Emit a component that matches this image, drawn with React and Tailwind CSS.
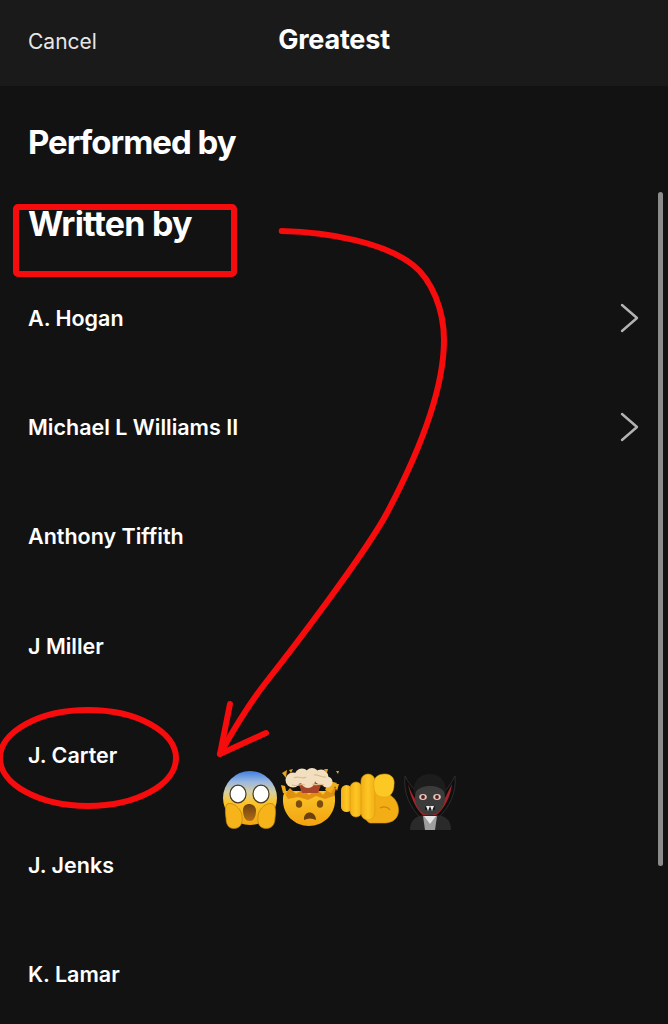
import React from "react";

const names = ["A. Hogan", "Michael L Williams II", "Anthony Tiffith", "J Miller", "J. Carter", "J. Jenks", "K. Lamar"];
const withChevron = new Set(["A. Hogan", "Michael L Williams II"]);

function Chevron() {
  return (
    <svg width="20" height="32" viewBox="0 0 20 32" fill="none" stroke="#b3b3b3" strokeWidth="2.4" strokeLinecap="round" strokeLinejoin="round">
      <path d="M2 3 L17 16 L2 29" />
    </svg>
  );
}

function Fear() {
  return (
    <g>
      <ellipse cx="250" cy="798" rx="27" ry="27" fill="url(#fearG)" />
      <ellipse cx="238" cy="794" rx="8" ry="8.8" fill="#fff" stroke="#4a3a20" strokeWidth="1.2" />
      <ellipse cx="261" cy="794" rx="8" ry="8.8" fill="#fff" stroke="#4a3a20" strokeWidth="1.2" />
      <path d="M243 810 C243 802 255 802 256 810 C256 818 253 821 250 821 C246 821 243 818 243 810Z" fill="url(#mouthG)" />
      <path d="M227 804 C232 802 238 806 241 812 C243 818 243 826 237 828 C230 830 226 826 226 818 C225 812 225 807 227 804Z" fill="#f6b41a" stroke="#b97f0e" strokeWidth="0.7" />
      <path d="M273 804 C268 802 262 806 259 812 C257 818 257 826 263 828 C270 830 275 826 275 818 C276 812 276 807 273 804Z" fill="#f6b41a" stroke="#b97f0e" strokeWidth="0.7" />
    </g>
  );
}

function Explode() {
  return (
    <g>
      <path d="M283 798 C282 815 295 826 309 826 C323 826 336 815 335 798 C335 795 334 793 333 791 L286 791 C284 793 283 795 283 798Z" fill="url(#faceG)" />
      <path d="M285 794 L290 788 L296 794 L303 789 L309 795 L317 789 L323 795 L330 786 L336 788 L334 796 L325 799 L316 796 L308 800 L298 797 L288 799Z" fill="#e09010" />
      <path d="M281 785 L285 786 L287 795 L283 793Z M329 781 L337 783 L331 793 L325 790Z M334 784 L339 784 L337 791Z" fill="#f3ad1c" />
      <path d="M298 782 L322 782 L318 793 L302 793Z" fill="#a9452a" />
      <g fill="#f2dfc0">
        <circle cx="293" cy="780" r="7.5" />
        <circle cx="302" cy="776" r="7.5" />
        <circle cx="312" cy="775" r="7" />
        <circle cx="321" cy="777" r="7.5" />
        <circle cx="327" cy="782" r="5.5" />
        <circle cx="308" cy="781" r="7" />
      </g>
      <path d="M294 778 C298 775 302 780 306 777 M314 775 C318 774 322 778 326 777 M292 785 C297 787 301 783 305 785 M312 784 C316 786 320 783 324 785" stroke="#dcbb8c" strokeWidth="1.2" />
      <path d="M282 773 L287 770 L286 778Z M289 770 L293 769 L291 773Z M324 769 L328 769 L327 773Z M336 771 L339 771 L338 774Z" fill="#e9a21c" />
      <ellipse cx="299" cy="804" rx="3.2" ry="3.8" fill="#7a4c10" />
      <ellipse cx="320" cy="804" rx="3.2" ry="3.8" fill="#7a4c10" />
      <path d="M304 820 C303 810 316 810 316 820 C312 818 308 818 304 820Z" fill="#6b3f10" />
    </g>
  );
}

function Point() {
  return (
    <g>
      <path d="M372 790 C384 790 396 796 398 806 C400 815 396 822 386 823 L370 823 C362 820 360 800 372 790Z" fill="#f2ae14" stroke="#d6950f" strokeWidth="0.6" />
      <rect x="341" y="785" width="11" height="27" rx="5.5" fill="url(#fingerG)" />
      <rect x="350" y="782" width="12" height="35" rx="6" fill="url(#fingerG)" stroke="#dc9b10" strokeWidth="0.6" />
      <rect x="361" y="774" width="14" height="46" rx="7" fill="url(#fingerG)" stroke="#dc9b10" strokeWidth="0.6" />
      <path d="M374 786 C373 778 377 774 385 774 C392 774 395 779 394 785 C394 792 390 798 384 797 C377 797 374 793 374 786Z" fill="#fcc824" stroke="#e0a012" strokeWidth="0.5" />
      <path d="M380 808 C384 806 388 807 390 810" stroke="#c98a0c" strokeWidth="1.3" />
    </g>
  );
}

function Vampire() {
  return (
    <g>
      <path d="M405 776 C403 792 410 808 421 818 L438 818 C449 808 457 792 455 776 C452 782 449 786 446 790 L415 790 C411 786 408 782 405 776Z" fill="#0e0e0e" stroke="#333" strokeWidth="0.8" />
      <path d="M408 784 C410 796 416 810 424 816 L435 816 C444 810 451 796 452 784 C449 790 446 796 444 800 L416 800 C413 796 410 790 408 784Z" fill="#a02428" />
      <path d="M410 830 C410 820 416 816 424 815 L436 815 C446 816 451 820 451 830Z" fill="#2a2a2a" />
      <path d="M423 816 L437 816 L435 830 L425 830Z" fill="#9f9f9f" />
      <path d="M424 816 L436 816 L430 824Z" fill="#e6e6e6" />
      <ellipse cx="430" cy="797" rx="15" ry="18" fill="#3b3b3b" />
      <path d="M414 795 C412 781 420 774 430 774 C440 774 447 781 446 795 C443 788 437 786 430 786 C423 786 417 788 414 795Z" fill="#1c1c1c" />
      <ellipse cx="423" cy="797" rx="3.8" ry="3" fill="#e3c8c2" />
      <ellipse cx="437" cy="797" rx="3.8" ry="3" fill="#e3c8c2" />
      <circle cx="423" cy="797" r="1.9" fill="#5c1c1c" />
      <circle cx="437" cy="797" r="1.9" fill="#5c1c1c" />
      <rect x="425" y="806" width="10" height="4" rx="1.5" fill="#161616" />
      <path d="M426 806 L428 811 L430 806Z M430 806 L432 811 L434 806Z" fill="#eee" />
    </g>
  );
}

export default function App() {
  return (
    <div className="relative w-[668px] h-[1024px] overflow-hidden bg-[#121212] text-white font-['Inter','Liberation_Sans',sans-serif]">
      <header className="relative flex h-[86px] items-center justify-center bg-[#1a1a1a]">
        <span className="absolute left-7 top-[28px] text-[21px] leading-7 font-normal text-[#e6e6e6]">Cancel</span>
        <h1 className="text-[27px] leading-8 font-bold tracking-[-0.2px] -mt-[7px]">Greatest</h1>
      </header>
      <main className="px-7">
        <h2 className="mt-[33px] h-[46px] text-[33px] leading-[46px] font-bold tracking-[-1px]">Performed by</h2>
        <h2 className="mt-[36px] h-[46px] text-[34px] leading-[46px] font-bold tracking-[-0.8px]">Written by</h2>
        <ul className="mt-[16px]">
          {names.map((name) => (
            <li key={name} className="flex h-[109.4px] items-center justify-between">
              <span className="text-[21.5px] font-semibold">{name}</span>
              {withChevron.has(name) && <Chevron />}
            </li>
          ))}
        </ul>
      </main>
      <div className="absolute left-[658px] top-[192px] h-[674px] w-[5px] rounded-full bg-[#8c8c8c]" />
      <svg className="absolute inset-0 pointer-events-none" width="668" height="1024" viewBox="0 0 668 1024" fill="none">
        <defs>
          <linearGradient id="fearG" x1="0" y1="0" x2="0" y2="1">
            <stop offset="0" stopColor="#3f7fe0" />
            <stop offset="0.2" stopColor="#9ab8e0" />
            <stop offset="0.4" stopColor="#d8d0a0" />
            <stop offset="0.58" stopColor="#fbc52a" />
            <stop offset="1" stopColor="#f2a510" />
          </linearGradient>
          <linearGradient id="faceG" x1="0" y1="0" x2="0" y2="1">
            <stop offset="0" stopColor="#fbc52a" />
            <stop offset="1" stopColor="#f2a30f" />
          </linearGradient>
          <linearGradient id="mouthG" x1="0" y1="0" x2="0" y2="1">
            <stop offset="0" stopColor="#6e4110" />
            <stop offset="1" stopColor="#b06d14" />
          </linearGradient>
          <linearGradient id="fingerG" x1="0" y1="0" x2="1" y2="0">
            <stop offset="0" stopColor="#f2ae14" />
            <stop offset="0.5" stopColor="#fdc725" />
            <stop offset="1" stopColor="#f2ae14" />
          </linearGradient>
        </defs>
        <rect x="16" y="207" width="218" height="67" rx="2" stroke="#f60c0c" strokeWidth="6" />
        <path d="M281.7 231 C330 232 385 243 413 265 C432 280 444 310 444 340 C444 395 415 460 387 513 C365 554 290 652 267 681 C252 700 235 727 220 754" stroke="#f60c0c" strokeWidth="6" strokeLinecap="round" />
        <path d="M230 704 L220 754 L266 733" stroke="#f60c0c" strokeWidth="6" strokeLinecap="round" strokeLinejoin="round" />
        <ellipse cx="88" cy="758" rx="88" ry="48" stroke="#f60c0c" strokeWidth="6" />
        <Fear />
        <Explode />
        <Point />
        <Vampire />
      </svg>
    </div>
  );
}
